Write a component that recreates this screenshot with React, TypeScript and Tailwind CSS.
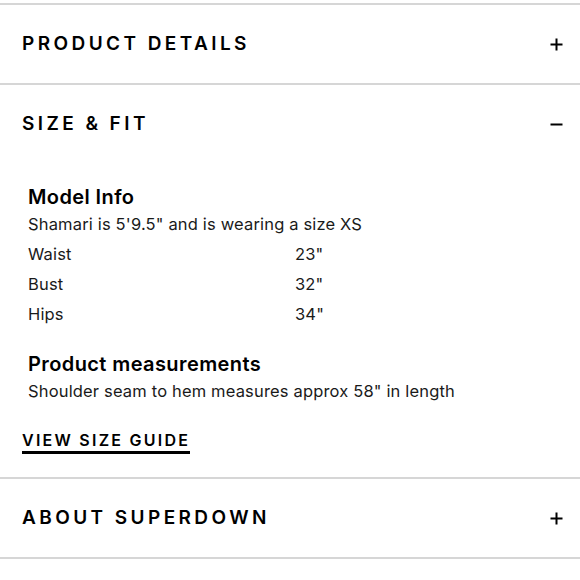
import React from "react";

const FONT = { fontFamily: "Inter, 'Noto Sans', sans-serif" };

function Plus() {
  return (
    <svg width="13" height="13" viewBox="0 0 13 13" className="text-black">
      <path d="M6.5 0.5v12M0.5 6.5h12" stroke="currentColor" strokeWidth="2" />
    </svg>
  );
}

function Minus() {
  return (
    <svg width="13" height="13" viewBox="0 0 13 13" className="text-black">
      <path d="M0.5 6.5h12" stroke="currentColor" strokeWidth="2" />
    </svg>
  );
}

function Header({ title, open }: { title: string; open?: boolean }) {
  return (
    <div className="flex h-[78px] items-center justify-between pl-[22px] pr-[17px]">
      <span className="text-[19px] font-semibold uppercase tracking-[0.18em] text-black">
        {title}
      </span>
      {open ? <Minus /> : <Plus />}
    </div>
  );
}

const MEASURES = [
  { label: "Waist", value: '23"' },
  { label: "Bust", value: '32"' },
  { label: "Hips", value: '34"' },
];

export default function App() {
  return (
    <div className="min-h-[580px] w-[580px] bg-white pt-[3px] text-black" style={FONT}>
      <div className="border-t-2 border-[#d6d6d6]" />
      <Header title="Product Details" />
      <div className="border-t-2 border-[#d6d6d6]" />
      <Header title="Size & Fit" open />
      <div className="pl-[28px] pt-[22px]">
        <h3 className="text-[20px] font-semibold leading-[24px] tracking-[0.02em]">Model Info</h3>
        <p className="text-[16.5px] leading-[30px] tracking-[0.01em] text-[#1a1a1a]">
          Shamari is 5'9.5" and is wearing a size XS
        </p>
        {MEASURES.map((m) => (
          <div
            key={m.label}
            className="grid grid-cols-[267px_1fr] text-[16.5px] leading-[30px] tracking-[0.01em] text-[#1a1a1a]"
          >
            <span>{m.label}</span>
            <span>{m.value}</span>
          </div>
        ))}
        <h3 className="mt-[23px] text-[20px] font-semibold leading-[24px] tracking-[0.02em]">
          Product measurements
        </h3>
        <p className="text-[16.5px] leading-[30px] tracking-[0.01em] text-[#1a1a1a]">
          Shoulder seam to hem measures approx 58" in length
        </p>
      </div>
      <div className="pl-[22px] pt-[22px] pb-[23px]">
        <a className="inline-block border-b-[3px] border-black pb-[1px] text-[16px] font-semibold uppercase leading-[20px] tracking-[0.14em]">
          View Size Guide
        </a>
      </div>
      <div className="border-t-2 border-[#d6d6d6]" />
      <Header title="About Superdown" />
      <div className="border-t-2 border-[#d6d6d6]" />
    </div>
  );
}
